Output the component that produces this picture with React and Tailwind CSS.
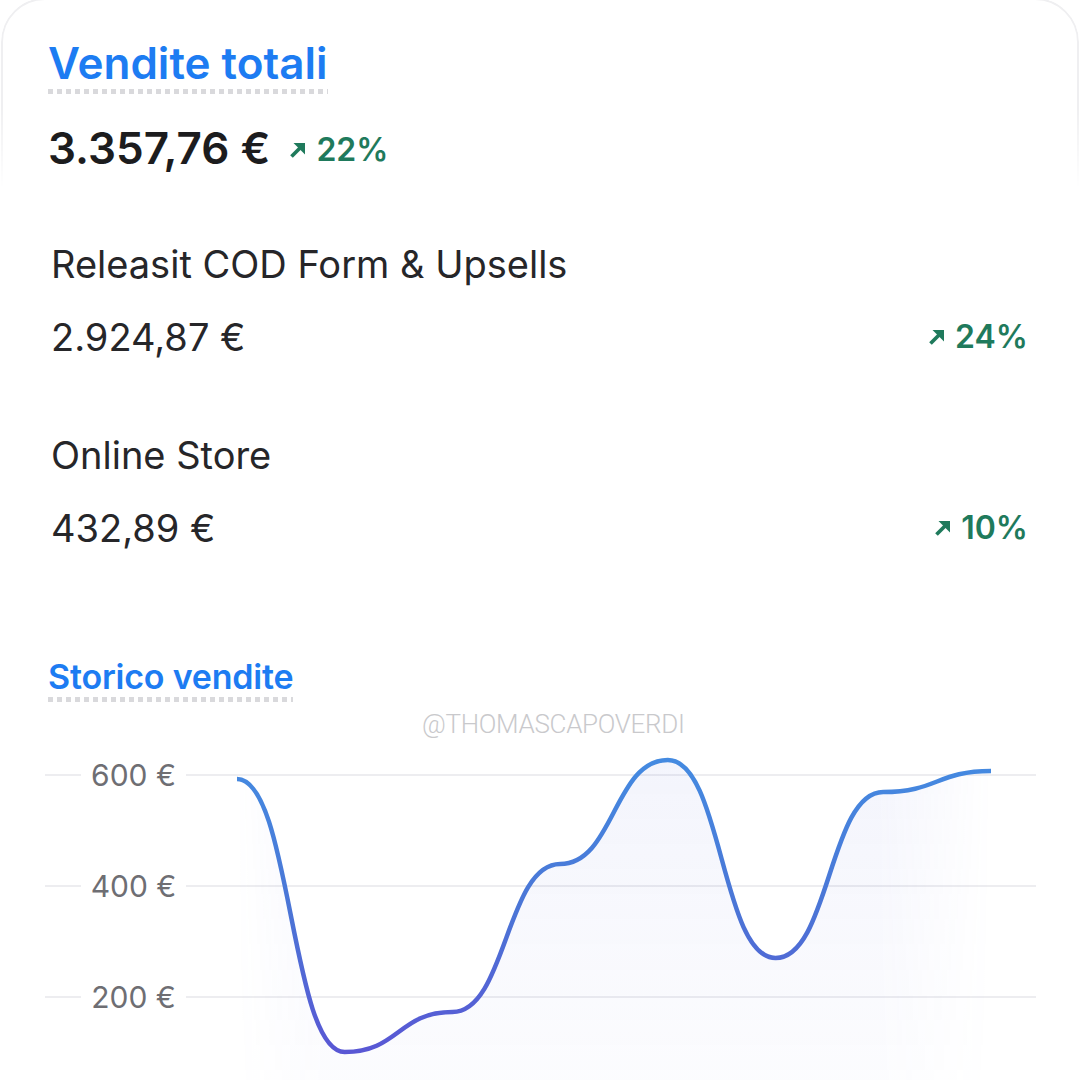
import React from "react";

function Arrow({ className = "" }) {
  return (
    <svg viewBox="0 0 16 16" className={className} aria-hidden="true">
      <path d="M1.5 14.5 L10 6" stroke="#1f7a5c" strokeWidth="3.8" strokeLinecap="butt" fill="none" />
      <path d="M3.5 1 H15 V12.5 Z" fill="#1f7a5c" />
    </svg>
  );
}

function Dotted({ className = "" }) {
  return (
    <div
      className={
        "h-[5px] bg-[repeating-linear-gradient(90deg,#d9d9dc_0_5px,transparent_5px_9px)] " + className
      }
    />
  );
}

const xs = [237, 344.7, 452.4, 560.1, 667.8, 775.5, 883.2, 991];
const ys = [779, 1052, 1012, 864, 760, 958, 792, 771];
const TOP = 740;

function curvePath() {
  let d = `M ${xs[0]} ${ys[0] - TOP}`;
  for (let i = 1; i < xs.length; i++) {
    const dx = (xs[i] - xs[i - 1]) / 2;
    d += ` C ${xs[i - 1] + dx} ${ys[i - 1] - TOP}, ${xs[i] - dx} ${ys[i] - TOP}, ${xs[i]} ${ys[i] - TOP}`;
  }
  return d;
}

function GridRow({ label }) {
  return (
    <div className="flex h-[111px] items-center">
      <div className="ml-[45px] h-[2px] w-[36px] bg-[#ededf0]" />
      <div className="w-[105px] text-center text-[30px] leading-none text-[#6e6e73]">
        {label}
      </div>
      <div className="h-[2px] w-[850px] bg-[#ededf0]" />
    </div>
  );
}

function Pct({ value }) {
  return (
    <div className="flex items-center text-[32px] font-semibold leading-none text-[#1f7a5c]">
      <Arrow className="mr-[10px] h-[16px] w-[16px]" />
      {value}
    </div>
  );
}

export default function App() {
  const d = curvePath();
  const area = `${d} L ${xs[xs.length - 1]} 340 L ${xs[0]} 340 Z`;
  return (
    <div className="relative h-[1080px] w-[1080px] overflow-hidden bg-white font-[family-name:Inter,sans-serif] text-[#1f1f22]">
      <div className="absolute left-[1px] right-[1px] top-[-2px] h-[400px] rounded-[44px] border-2 border-[#efeff1] [mask-image:linear-gradient(to_bottom,black_0,black_110px,transparent_190px)]" />
      <div className="relative">
        <div className="pl-[48px] pt-[38px]">
          <div className="inline-flex flex-col">
            <div className="text-[44px] font-semibold leading-[50px] text-[#1d7cf2]">
              Vendite totali
            </div>
            <Dotted className="mt-[1px]" />
          </div>
          <div className="mt-[29px] flex items-center">
            <div className="text-[44px] font-semibold leading-[50px] text-[#1c1c1e]">
              3.357,76 €
            </div>
            <div className="ml-[20px] mt-[3px]">
              <Pct value="22%" />
            </div>
          </div>
        </div>

        <div className="pl-[51px] pr-[52px] pt-[71px]">
          <div className="text-[38px] leading-[40px] text-[#262629]">
            Releasit COD Form &amp; Upsells
          </div>
          <div className="mt-[33px] flex items-center justify-between">
            <div className="text-[38px] leading-[40px] text-[#262629]">2.924,87 €</div>
            <Pct value="24%" />
          </div>

          <div className="mt-[78px] text-[38px] leading-[40px] text-[#262629]">
            Online Store
          </div>
          <div className="mt-[33px] flex items-center justify-between">
            <div className="text-[38px] leading-[40px] text-[#262629]">432,89 €</div>
            <Pct value="10%" />
          </div>
        </div>

        <div className="pl-[48px] pt-[109px]">
          <div className="inline-flex flex-col">
            <div className="text-[34px] font-semibold leading-[40px] tracking-[-0.2px] text-[#1d7cf2]">
              Storico vendite
            </div>
            <Dotted className="mt-[0px]" />
          </div>
        </div>

        <div className="absolute left-[422px] top-[706px] font-[family-name:Roboto,sans-serif] text-[26px] font-light leading-[36px] tracking-[-0.3px] text-[#c9c9cc]">
          @THOMASCAPOVERDI
        </div>

        <div className="absolute left-0 top-[740px] h-[340px] w-[1080px]">
          <div className="-mt-[21px]">
            <GridRow label="600 €" />
            <GridRow label="400 €" />
            <GridRow label="200 €" />
          </div>
          <svg className="absolute left-0 top-0" width="1080" height="340" viewBox="0 0 1080 340">
            <defs>
              <linearGradient id="stroke" x1="0" y1="0" x2="0" y2="340" gradientUnits="userSpaceOnUse">
                <stop offset="0" stopColor="#438de2" />
                <stop offset="0.5" stopColor="#4b75d6" />
                <stop offset="0.95" stopColor="#5a55d4" />
              </linearGradient>
              <linearGradient id="fillv" x1="0" y1="0" x2="0" y2="1">
                <stop offset="0" stopColor="#5b6bd8" stopOpacity="0.07" />
                <stop offset="1" stopColor="#5b6bd8" stopOpacity="0.02" />
              </linearGradient>
              <linearGradient id="fadeh" x1="237" y1="0" x2="991" y2="0" gradientUnits="userSpaceOnUse">
                <stop offset="0" stopColor="white" stopOpacity="0" />
                <stop offset="0.12" stopColor="white" stopOpacity="1" />
                <stop offset="0.85" stopColor="white" stopOpacity="1" />
                <stop offset="1" stopColor="white" stopOpacity="0" />
              </linearGradient>
              <mask id="areamask">
                <rect x="0" y="0" width="1080" height="340" fill="url(#fadeh)" />
              </mask>
            </defs>
            <path d={area} fill="url(#fillv)" mask="url(#areamask)" />
            <path d={d} fill="none" stroke="url(#stroke)" strokeWidth="4.5" strokeLinecap="butt" />
          </svg>
        </div>
      </div>
    </div>
  );
}
